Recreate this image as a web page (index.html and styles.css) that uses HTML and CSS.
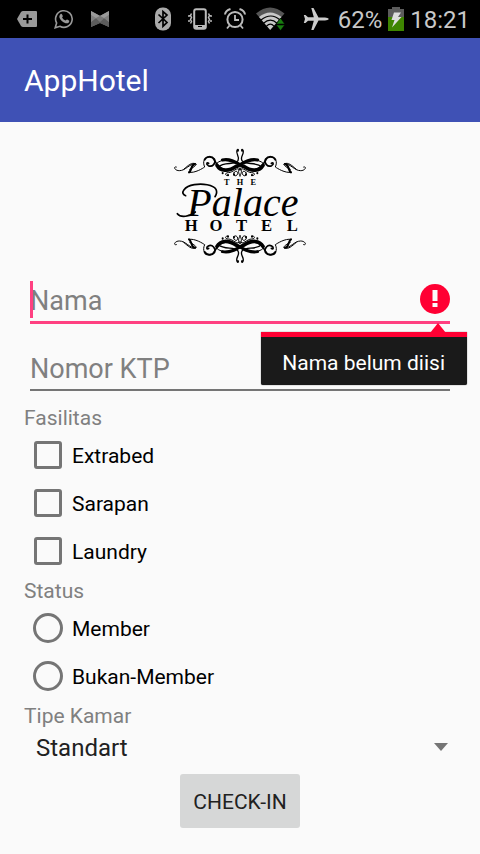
FILE: index.html
```html
<!DOCTYPE html>
<html lang="id">
<head>
<meta charset="utf-8">
<meta name="viewport" content="width=device-width, initial-scale=1">
<title>AppHotel</title>
<link rel="stylesheet" href="styles.css">
</head>
<body>
<div class="statusbar">
  <div class="status-group notifications">
    <svg width="20" height="18" viewBox="0 0 20 18"><path fill="#999" d="M6 1h13q1 0 1 1v14q0 1-1 1H6q-1 0-2-1L0 9l4-7q1-1 2-1z"/><path stroke="#000" stroke-width="2" d="M6 9h9M10.500 4.500v9"/></svg>
    <svg width="20" height="20" viewBox="0 0 20 20"><path fill="none" stroke="#999" stroke-width="1.600" d="M1.200 18.800l1.400-4.800a8.300 8.300 0 1 1 3.300 3.300z"/><path fill="#999" d="M6.400 5.200c.7-.7 1.400-.4 1.700.3l.7 1.600c.2.600-.7 1.200-.7 1.500.8 1.600 2 2.500 3.500 3 .4 0 .9-1.200 1.500-1l1.900.9c.5.300.3 1.300-.2 1.900-.8.900-2 1.200-3.200.8-3.100-.9-5.100-2.900-6.100-5.400-.4-1.300 0-2.700.9-3.600z"/></svg>
    <svg width="18" height="18" viewBox="0 0 18 18"><path fill="#777" d="M0 1l9 5 9-5v16l-9-4-9 4z"/><path fill="#999" d="M0 1l13 7-4 4-9-7zM18 1L5 8l4 4 9-7z"/><path fill="#5c5c5c" d="M0 17v-5l5-4 4 4 4-4 5 4v5l-9-4z"/><path fill="#808080" d="M0 5l5 3-5 4zM18 5l-5 3 5 4z"/></svg>
  </div>
  <div class="status-group system">
    <svg class="bluetooth" width="16" height="24" viewBox="0 0 16 24"><rect width="16" height="23" y=".5" rx="7.500" fill="#aaa"/><path fill="none" stroke="#000" stroke-width="1.700" d="M3.500 7.500l8.500 8-4 3.700V4.500L12 8l-8.500 8"/></svg>
    <svg width="24" height="22" viewBox="0 0 24 22"><rect x="6.200" y="1.200" width="11.600" height="19.600" rx="2" fill="none" stroke="#bbb" stroke-width="2"/><path stroke="#bbb" stroke-width="3" d="M6 18.500h12"/><path stroke="#000" d="M10 18.500h4"/><path fill="none" stroke="#bbb" stroke-width="1.500" d="M3.500 5.500l-1 2 1 2-1 2 1 2-1 2M1 7v2M1 12v2M20.500 5.500l1 2-1 2 1 2-1 2 1 2M23 7v2M23 12v2"/></svg>
    <svg width="22" height="22" viewBox="0 0 22 22"><g fill="none" stroke="#bbb"><circle cx="11" cy="11.500" r="7.600" stroke-width="2"/><path stroke-width="1.800" d="M11 7v5h4M5.500 17.500L3 20.500M16.500 17.500l2.500 3"/><path stroke-width="2" d="M1 6.500q.5-4 5.500-5.500M21 6.500Q20.500 2.500 15.500 1"/></g></svg>
    <svg class="wifi" width="29" height="24" viewBox="0 0 29 24"><path fill="#555" d="M0 6.500q14-12 28.500 0L24.500 11q-10-8-20.500 0z"/><path fill="#c8c8c8" d="M3 10q11-9 22.500 0L14.200 23z"/><path fill="none" stroke="#000" stroke-width="1.200" d="M5 13q10-8 19 0M7.500 16.200q7-6 13.500 0M10.500 19.200q4-4 7.500 0"/><path fill="#197d10" stroke="#000" stroke-width=".6" d="M24.500 11l4.300 6h-8.600zM20.200 18h8.600l-4.300 5.600z"/></svg>
    <svg class="plane" width="26" height="22" viewBox="0 0 26 22"><path fill="#ccc" d="M26 11q-1 1.300-4 1.400h-6.500L10.500 22H8.300l2.500-9.300H5L2.500 15H.8L2 11 .8 7h1.700L5 9.300h5.800L8.300 0h2.200l5 9.600H22q3 .1 4 1.400z"/></svg>
    <span>62%</span>
    <svg class="battery" width="16" height="24" viewBox="0 0 16 24"><path fill="#5c5c5c" d="M4 0h8v2h4v10H0V2h4z"/><path fill="#3e8500" d="M0 10h16v14H0z"/><path fill="#ddd" d="M6 5.500h7L10 10h3.500L4 20.500 6.500 13H3.500z"/></svg>
    <span>18:21</span>
  </div>
</div>
<header class="appbar"><h1>AppHotel</h1></header>
<main>
  <svg class="logo" viewBox="0 18 450 360" role="img" aria-label="The Palace Hotel">
    <defs>
      <g id="half" fill="none" stroke="#000" stroke-linecap="round" stroke-linejoin="round">
        <path stroke-width="3" d="M34 81C24 78 28 92 43 92C62 92 72 72 91 71C100 71 86 83 74 88"/>
        <path stroke-width="6" d="M90 72C76 75 82 91 72 97"/>
        <path stroke-width="3" d="M56 88C70 76 80 66 91 71M72 97C90 100 113 85 119 81C112 65 117 50 136 50"/>
        <path stroke-width="6" d="M119 59C124 48 141 48 148 58"/>
        <path stroke-width="5" d="M148 58C154 69 142 83 130 77C122 72 126 65 131 70"/>
        <path stroke-width="5" d="M148 60C164 93 194 98 225 72"/>
        <path stroke-width="11" d="M156 76C166 94 190 96 214 79"/>
        <path stroke-width="3" d="M153 74C158 60 190 52 225 75"/>
        <path stroke-width="9" d="M172 60C192 55 210 64 234 80"/>
        <path stroke-width="4" d="M158 82C180 62 206 78 219 62C226 50 211 43 216 31C218 26 222 29 219 33"/>
        <path stroke-width="3" d="M225 90C216 78 205 98 190 98C177 98 181 110 190 106M207 98C201 109 216 111 218 101C219 93 211 91 207 98M225 84C216 94 223 101 225 108"/>
        <path stroke-width="6" d="M173 99v1M189 105v1M207 103v1"/>
      </g>
      <g id="ornament"><use href="#half"/><use href="#half" transform="translate(450) scale(-1 1)"/></g>
    </defs>
    <use href="#ornament"/>
    <use href="#ornament" transform="translate(0 395) scale(1 -1)"/>
    <g class="logo-caps">
      <g font-size="25"><text x="185" y="134">T</text><text x="225" y="134">H</text><text x="265" y="134">E</text></g>
      <g font-size="50"><text x="79" y="274">H</text><text x="153" y="274">O</text><text x="230" y="274">T</text><text x="305" y="274">E</text><text x="382" y="274">L</text></g>
    </g>
    <text class="logo-script" x="67" y="229">Palace</text>
    <path fill="none" stroke="#000" stroke-width="5" stroke-linecap="round" d="M62 167C43 160 58 139 88 134C112 130 145 134 153 148C157 156 154 164 150 170M91 216C76 229 47 235 37 221"/>
  </svg>
  <form novalidate>
    <div class="field invalid">
      <input type="text" id="nama" placeholder="Nama" aria-label="Nama" aria-describedby="nama-error">
      <span class="caret"></span>
      <svg class="error-icon" width="30" height="30" viewBox="0 0 30 30"><circle cx="15" cy="15" r="15" fill="#ff0033"/><path fill="#fafafa" d="M12.500 6h5v11h-5zM12.500 19h5v4h-5z"/></svg>
      <div class="error-popup" id="nama-error" role="alert">Nama belum diisi</div>
    </div>
    <div class="field">
      <input type="text" id="ktp" placeholder="Nomor KTP" aria-label="Nomor KTP">
    </div>
    <fieldset>
      <legend>Fasilitas</legend>
      <label class="option"><input type="checkbox" name="fasilitas"><span>Extrabed</span></label>
      <label class="option"><input type="checkbox" name="fasilitas"><span>Sarapan</span></label>
      <label class="option"><input type="checkbox" name="fasilitas"><span>Laundry</span></label>
    </fieldset>
    <fieldset>
      <legend>Status</legend>
      <label class="option"><input type="radio" name="status"><span>Member</span></label>
      <label class="option"><input type="radio" name="status"><span>Bukan-Member</span></label>
    </fieldset>
    <label class="caption" for="kamar">Tipe Kamar</label>
    <div class="spinner">
      <select id="kamar"><option>Standart</option></select>
      <svg class="arrow" width="14" height="8" viewBox="0 0 14 8"><path fill="#757575" d="M0 0h14L7 8z"/></svg>
    </div>
    <button type="button">CHECK-IN</button>
  </form>
</main>
</body>
</html>
```
FILE: styles.css
```css
* {
  box-sizing: border-box;
}

body {
  margin: 0;
  background: #fafafa;
  color: #000;
  font-family: Roboto, "Liberation Sans", sans-serif;
  font-size: 21px;
}

svg {
  display: block;
  flex: none;
}

.statusbar {
  display: flex;
  justify-content: space-between;
  height: 38px;
  padding: 0 10px 0 17px;
  background: #000;
  color: #c8c8c8;
  font-size: 24px;
}

.status-group {
  display: flex;
  align-items: center;
}

.notifications {
  gap: 17px;
}

.system {
  gap: 12px;
}

.system span {
  padding-top: 2px;
  line-height: 36px;
}

.system .bluetooth {
  margin-right: 5px;
}

.system .wifi {
  margin-left: -2px;
}

.system .plane {
  margin: 0 -3px 0 6px;
}

.system .battery {
  margin: 0 -6px 0 -6px;
}

.appbar {
  display: flex;
  align-items: center;
  height: 84px;
  padding: 0 24px;
  background: #3f51b5;
  color: #fff;
}

h1 {
  margin: 0;
  font-size: 30px;
  font-weight: 400;
}

main {
  padding: 24px;
}

.logo {
  width: 150px;
  height: 120px;
  margin: 0 auto;
}

.logo-caps {
  font-family: "Liberation Serif", serif;
  font-weight: 700;
  text-anchor: middle;
}

.logo-script {
  font-family: "Liberation Serif", serif;
  font-size: 120px;
  font-style: italic;
}

form {
  display: flex;
  flex-direction: column;
}

.field {
  position: relative;
  height: 68px;
  padding: 0 6px;
}

.field input {
  display: block;
  width: 100%;
  height: 57px;
  padding: 14px 0 0;
  border: 0;
  border-bottom: 2px solid #757575;
  border-radius: 0;
  outline: 0;
  background: transparent;
  color: #212121;
  font: inherit;
  font-size: 27px;
}

.field.invalid input {
  height: 58px;
  padding-right: 36px;
  border-bottom: 3px solid #ff4081;
}

.field input::placeholder {
  color: #808080;
  opacity: 1;
}

.caret {
  position: absolute;
  top: 15px;
  left: 6px;
  width: 3px;
  height: 37px;
  background: #ff4081;
}

.error-icon {
  position: absolute;
  top: 18px;
  right: 6px;
}

.error-popup {
  position: absolute;
  z-index: 1;
  top: 66px;
  right: -11px;
  height: 53px;
  padding: 0 22px 0 21px;
  border-top: 5px solid #ff0033;
  border-radius: 0 0 2px 2px;
  background: #1a1a1a;
  box-shadow: 0 0 1px #1a1a1a;
  color: #fff;
  line-height: 52px;
  white-space: nowrap;
}

.error-popup::before {
  content: "";
  position: absolute;
  right: 21px;
  bottom: 100%;
  margin-bottom: 4px;
  border: 8px solid transparent;
  border-top: 0;
  border-bottom: 10px solid #ff0033;
}

fieldset {
  display: block;
  margin: 0;
  padding: 0;
  border: 0;
}

legend,
.caption {
  display: block;
  height: 29px;
  padding: 2px 0 0;
  color: #808080;
  line-height: 29px;
}

.option {
  display: flex;
  align-items: center;
  gap: 9px;
  height: 48px;
  padding-left: 9px;
}

.option span {
  padding-top: 2px;
}

.option input {
  appearance: none;
  flex: none;
  width: 30px;
  height: 30px;
  margin: 0;
  border: 3px solid #757575;
  border-radius: 50%;
}

.option input[type="checkbox"] {
  width: 28px;
  height: 28px;
  margin: 0 1px;
  border-radius: 3px;
}

.option input:checked {
  background: #ff4081;
}

.spinner {
  position: relative;
}

select {
  appearance: none;
  display: block;
  width: 100%;
  height: 36px;
  padding: 2px 36px 0 12px;
  border: 0;
  background: transparent;
  color: #212121;
  font: inherit;
  font-size: 24px;
}

.arrow {
  position: absolute;
  top: 14px;
  right: 8px;
  pointer-events: none;
}

button {
  align-self: center;
  min-width: 120px;
  height: 54px;
  margin-top: 9px;
  padding: 2px 12px 0;
  border: 0;
  border-radius: 3px;
  background: #d6d7d7;
  color: #212121;
  font: inherit;
}
```
